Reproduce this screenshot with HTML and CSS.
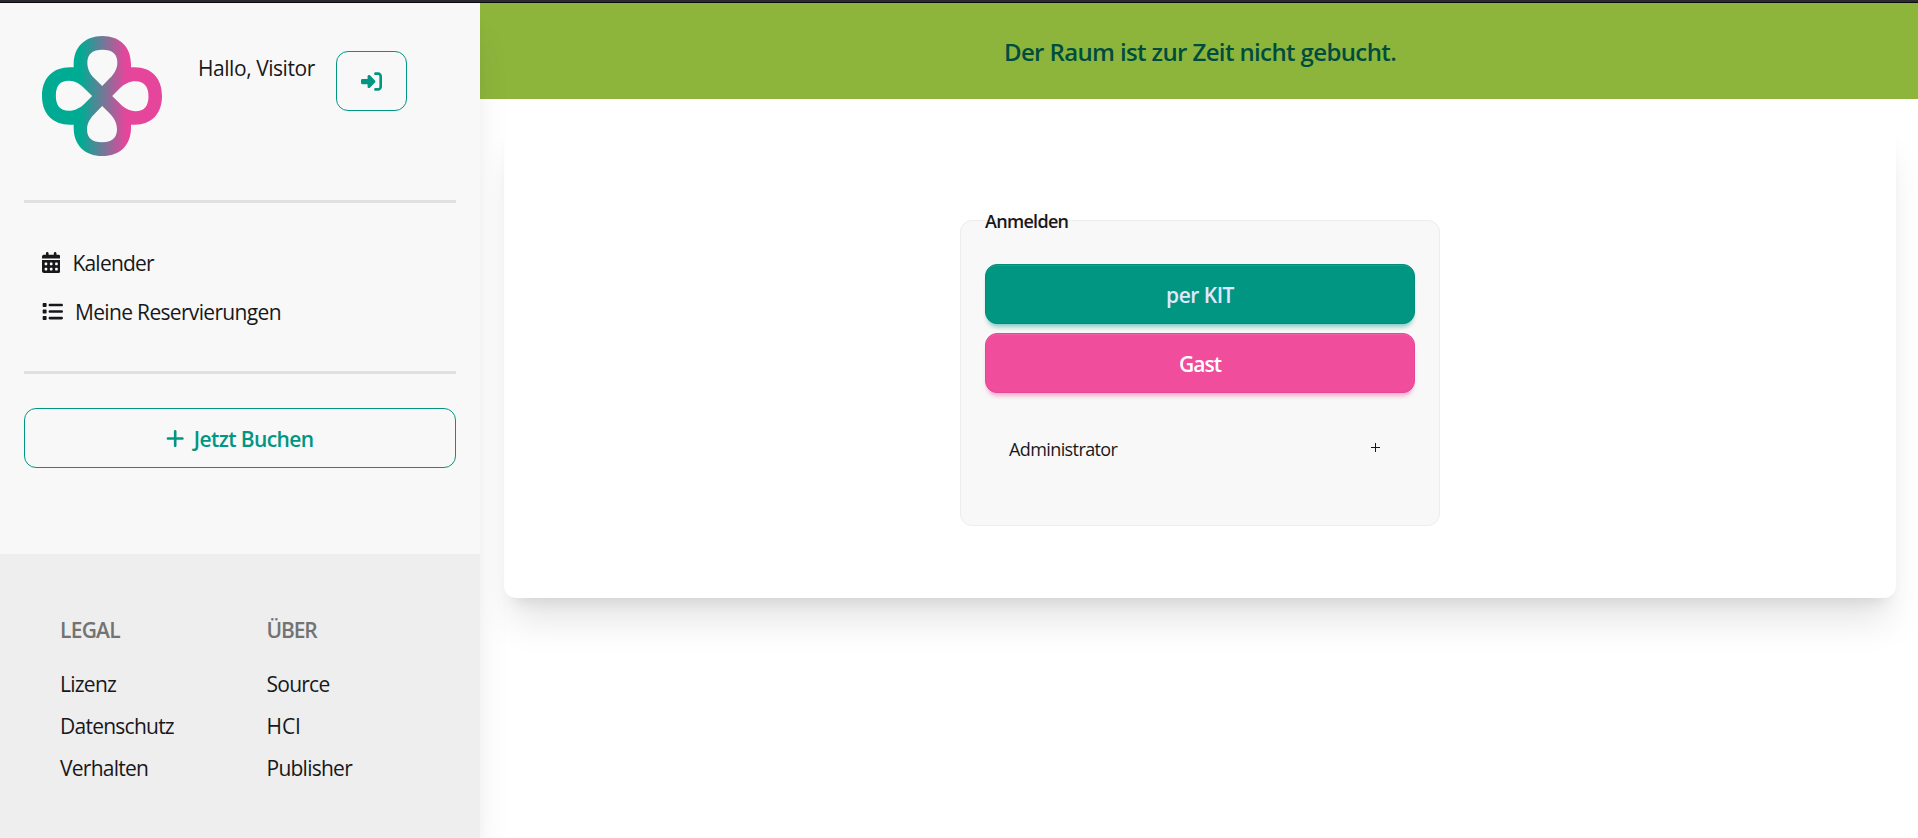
FILE: index.html
```html
<!DOCTYPE html>
<html lang="de">
<head>
<meta charset="utf-8">
<title>Anmelden</title>
<link rel="stylesheet" href="styles.css">
</head>
<body>
<div class="top-edge"></div>
<div class="layout">
  <aside class="sidebar">
    <header class="profile">
      <svg class="logo" viewBox="36 33 360 360">
        <defs>
          <linearGradient id="brand" gradientUnits="userSpaceOnUse" x1="152" y1="0" x2="288" y2="0">
            <stop offset="0" stop-color="#00ab94"/>
            <stop offset="1" stop-color="#e5469b"/>
          </linearGradient>
          <path id="drop" d="M216.500 183L193 160C180 147 172 131 172 113C172 87 188 74 217 74C247 74 262 87 262 113C262 131 253 146 239 160Z"/>
        </defs>
        <path fill="url(#brand)" d="M131 127V118C131 66 165 33 217 33C270 33 303 66 303 118V127H314C365 127 396 160 396 213C396 266 365 299 314 299H303V308C303 360 270 393 217 393C165 393 131 360 131 308V299H120C68 299 36 266 36 213C36 160 68 127 120 127Z"/>
        <g fill="#f8f8f8">
          <use href="#drop"/>
          <use href="#drop" transform="rotate(90 216.5 213)"/>
          <use href="#drop" transform="rotate(180 216.5 213)"/>
          <use href="#drop" transform="rotate(270 216.5 213)"/>
        </g>
      </svg>
      <span class="greeting">Hallo, Visitor</span>
      <button class="btn btn-outline btn-login" aria-label="Anmelden">
        <svg class="icon" viewBox="0 0 512 512"><path d="M217.9 105.9L340.7 228.7c7.2 7.2 11.3 17.1 11.3 27.3s-4.1 20.1-11.3 27.3L217.9 406.1c-6.4 6.4-15 9.9-24 9.9c-18.7 0-33.9-15.2-33.9-33.9l0-62.1L32 320c-17.7 0-32-14.3-32-32l0-64c0-17.7 14.3-32 32-32l128 0 0-62.1c0-18.7 15.2-33.9 33.9-33.9c9 0 17.6 3.6 24 9.9zM352 416l64 0c17.7 0 32-14.3 32-32l0-256c0-17.7-14.3-32-32-32l-64 0c-17.7 0-32-14.3-32-32s14.3-32 32-32l64 0c53 0 96 43 96 96l0 256c0 53-43 96-96 96l-64 0c-17.7 0-32-14.3-32-32s14.3-32 32-32z"/></svg>
      </button>
    </header>
    <hr class="divider">
    <nav class="menu">
      <a class="menu-item">
        <svg class="icon icon-narrow" viewBox="0 0 448 512"><path d="M128 0c17.7 0 32 14.3 32 32V64H288V32c0-17.7 14.3-32 32-32s32 14.3 32 32V64h48c26.5 0 48 21.5 48 48v48H0V112C0 85.5 21.5 64 48 64H96V32c0-17.7 14.3-32 32-32zM0 192H448V464c0 26.5-21.5 48-48 48H48c-26.5 0-48-21.5-48-48V192zm64 80v32c0 8.8 7.2 16 16 16h32c8.8 0 16-7.2 16-16V272c0-8.8-7.2-16-16-16H80c-8.8 0-16 7.2-16 16zm128 0v32c0 8.8 7.2 16 16 16h32c8.8 0 16-7.2 16-16V272c0-8.8-7.2-16-16-16H208c-8.8 0-16 7.2-16 16zm144-16c-8.8 0-16 7.2-16 16v32c0 8.8 7.2 16 16 16h32c8.8 0 16-7.2 16-16V272c0-8.8-7.2-16-16-16H336zM64 400v32c0 8.8 7.2 16 16 16h32c8.8 0 16-7.2 16-16V400c0-8.8-7.2-16-16-16H80c-8.8 0-16 7.2-16 16zm144-16c-8.8 0-16 7.2-16 16v32c0 8.8 7.2 16 16 16h32c8.8 0 16-7.2 16-16V400c0-8.8-7.2-16-16-16H208zm112 16v32c0 8.8 7.2 16 16 16h32c8.8 0 16-7.2 16-16V400c0-8.8-7.2-16-16-16H336c-8.8 0-16 7.2-16 16z"/></svg>
        <span class="label-calendar">Kalender</span>
      </a>
      <a class="menu-item">
        <svg class="icon" viewBox="0 0 512 512"><path d="M40 48C26.7 48 16 58.7 16 72v48c0 13.3 10.7 24 24 24H88c13.3 0 24-10.7 24-24V72c0-13.3-10.7-24-24-24H40zM192 64c-17.7 0-32 14.3-32 32s14.3 32 32 32H480c17.7 0 32-14.3 32-32s-14.3-32-32-32H192zm0 160c-17.7 0-32 14.3-32 32s14.3 32 32 32H480c17.7 0 32-14.3 32-32s-14.3-32-32-32H192zm0 160c-17.7 0-32 14.3-32 32s14.3 32 32 32H480c17.7 0 32-14.3 32-32s-14.3-32-32-32H192zM16 232v48c0 13.3 10.7 24 24 24H88c13.3 0 24-10.7 24-24V232c0-13.3-10.7-24-24-24H40c-13.3 0-24 10.7-24 24zM40 368c-13.3 0-24 10.7-24 24v48c0 13.3 10.7 24 24 24H88c13.3 0 24-10.7 24-24V392c0-13.3-10.7-24-24-24H40z"/></svg>
        <span>Meine Reservierungen</span>
      </a>
    </nav>
    <hr class="divider">
    <button class="btn btn-outline btn-book">
      <svg class="icon icon-narrow" viewBox="0 0 448 512"><path d="M256 80c0-17.7-14.3-32-32-32s-32 14.3-32 32V224H48c-17.7 0-32 14.3-32 32s14.3 32 32 32H192V432c0 17.7 14.3 32 32 32s32-14.3 32-32V288H400c17.7 0 32-14.3 32-32s-14.3-32-32-32H256V80z"/></svg>
      <span class="btn-text">Jetzt Buchen</span>
    </button>
    <footer class="footer">
      <div class="footer-col">
        <h6 class="footer-title">LEGAL</h6>
        <a class="footer-link">Lizenz</a>
        <a class="footer-link">Datenschutz</a>
        <a class="footer-link">Verhalten</a>
      </div>
      <div class="footer-col">
        <h6 class="footer-title footer-title-about">ÜBER</h6>
        <a class="footer-link">Source</a>
        <a class="footer-link link-hci">HCI</a>
        <a class="footer-link">Publisher</a>
      </div>
    </footer>
  </aside>
  <main class="main">
    <div class="banner">Der Raum ist zur Zeit nicht gebucht.</div>
    <section class="card">
      <div class="login-box">
        <div class="legend">Anmelden</div>
        <button class="btn btn-primary"><span class="btn-text">per KIT</span></button>
        <button class="btn btn-secondary"><span class="btn-text">Gast</span></button>
        <div class="collapse">
          <span>Administrator</span>
          <svg class="plus" viewBox="0 0 9 9"><path d="M0 4.5H9M4.5 0V9"/></svg>
        </div>
      </div>
    </section>
  </main>
</div>
</body>
</html>
```

FILE: styles.css
```css
* { box-sizing: border-box; }

body {
  margin: 0;
  height: 838px;
  overflow: hidden;
  background: #fff;
  color: #18181b;
  font: 400 21px/30px "Open Sans", "Noto Sans", sans-serif;
  letter-spacing: -0.7px;
}

.top-edge {
  height: 3px;
  background: #2b2a33;
  border-bottom: 1px solid #0c0c0d;
}

.layout {
  display: grid;
  grid-template-columns: 480px 1fr;
  height: 835px;
}

.sidebar {
  z-index: 1;
  display: flex;
  flex-direction: column;
  background: #f8f8f8;
  box-shadow: 0 30px 37.5px -7.5px rgba(0, 0, 0, .1), 0 12px 15px -9px rgba(0, 0, 0, .1);
}

.profile {
  display: flex;
  align-items: flex-start;
  height: 197px;
  padding: 33px 24px 0 42px;
}

.logo {
  width: 120px;
  height: 120px;
}

.greeting {
  width: 138px;
  margin: 17px 0 0 36px;
  letter-spacing: -0.45px;
  white-space: nowrap;
}

.divider {
  flex: none;
  width: 432px;
  height: 3px;
  margin: 0 24px;
  border: 0;
  background: #e0e0e0;
}

.menu {
  display: flex;
  flex-direction: column;
  height: 168px;
  padding: 35px 42px 0;
}

.menu-item {
  display: flex;
  align-items: center;
  gap: 12px;
  height: 49px;
  letter-spacing: -0.67px;
}

.label-calendar { letter-spacing: -0.78px; }

.icon {
  flex: none;
  width: 21px;
  height: 21px;
  fill: currentColor;
}

.icon-narrow { width: 18.4px; }

.btn {
  display: flex;
  align-items: center;
  justify-content: center;
  height: 60px;
  padding: 0;
  border: 1px solid;
  border-radius: 12px;
  font: inherit;
  font-weight: 600;
  letter-spacing: -0.6px;
}

.btn-text { padding-top: 2px; }

.btn-outline {
  background: transparent;
  border-color: #009682;
  color: #009682;
}

.btn-login {
  width: 71px;
  margin-top: 15px;
}

.btn-book {
  gap: 9px;
  flex: none;
  margin: 34px 24px 0;
}

.footer {
  display: grid;
  grid-template-columns: 206.5px 1fr;
  flex: 1;
  margin-top: 86px;
  padding: 61px 60px 0;
  background: #eee;
}

.footer-col {
  display: flex;
  flex-direction: column;
  gap: 12px;
}

.footer-title {
  margin: 0 0 12px;
  color: #737373;
  font-size: 21px;
  font-weight: 600;
  letter-spacing: -0.75px;
}

.footer-title-about { letter-spacing: -1.1px; }

.footer-link { letter-spacing: -0.75px; }

.link-hci { letter-spacing: -0.1px; }

.banner {
  display: flex;
  align-items: center;
  justify-content: center;
  height: 96px;
  padding-top: 2px;
  background: #8db53c;
  color: #004d3f;
  font-size: 24px;
  font-weight: 600;
  letter-spacing: -0.62px;
}

.card {
  width: 1392px;
  height: 475px;
  margin: 24px;
  padding-top: 97px;
  border-radius: 12px;
  background: #fff;
  box-shadow: 0 30px 37.5px -7.5px rgba(0, 0, 0, .1), 0 12px 15px -9px rgba(0, 0, 0, .1);
}

.login-box {
  display: flex;
  flex-direction: column;
  width: 480px;
  height: 306px;
  margin: 0 auto;
  padding: 0 24px;
  border: 1px solid #ededed;
  border-radius: 12px;
  background: #f8f8f8;
}

.legend {
  height: 28px;
  margin: -14px 0 29px;
  font-size: 18px;
  font-weight: 600;
  line-height: 28px;
  letter-spacing: -0.7px;
}

.btn-primary {
  background: #009682;
  border-color: #008d7a;
  color: #e0e7ff;
  box-shadow: 0 5px 4px -2px rgba(0, 150, 130, .45), inset 0 1px 0 rgba(255, 255, 255, .1);
  letter-spacing: -0.5px;
}

.btn-secondary {
  margin-top: 9px;
  background: #f04d9d;
  border-color: #e34894;
  color: #fff;
  box-shadow: 0 5px 4px -2px rgba(240, 77, 157, .45), inset 0 1px 0 rgba(255, 255, 255, .1);
  letter-spacing: -0.95px;
}

.collapse {
  display: flex;
  justify-content: space-between;
  align-items: center;
  height: 30px;
  margin-top: 41px;
  padding: 0 35px 0 24px;
  font-size: 18px;
  letter-spacing: -0.6px;
}

.plus {
  width: 9px;
  height: 9px;
  margin-bottom: 3px;
  fill: none;
  stroke: currentColor;
}
```
